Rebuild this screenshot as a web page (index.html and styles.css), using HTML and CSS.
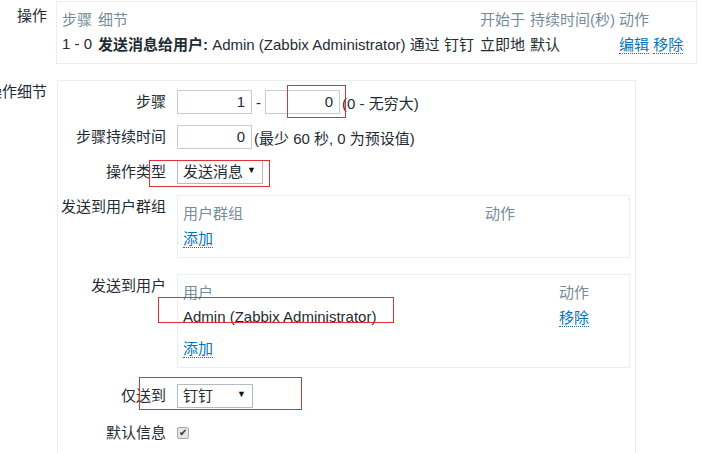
FILE: index.html
```html
<!DOCTYPE html>
<html lang="zh-CN">
<head>
<meta charset="utf-8">
<title>操作</title>
<link rel="stylesheet" href="styles.css">
</head>
<body>
<div class="page">
  <div class="section sec-ops">
    <div class="sec-label"><span>操作</span></div>
    <div class="ops-box">
      <table class="ops-table">
        <colgroup>
          <col class="c-step"><col class="c-detail"><col class="c-start"><col class="c-dur"><col class="c-act">
        </colgroup>
        <thead>
          <tr><th>步骤</th><th>细节</th><th>开始于</th><th>持续时间(秒)</th><th>动作</th></tr>
        </thead>
        <tbody>
          <tr>
            <td>1 - 0</td>
            <td><b>发送消息给用户:</b> Admin (Zabbix Administrator) 通过 钉钉</td>
            <td>立即地</td>
            <td>默认</td>
            <td><a class="link">编辑</a> <a class="link">移除</a></td>
          </tr>
        </tbody>
      </table>
    </div>
  </div>

  <div class="section sec-detail">
    <div class="sec-label"><span>操作细节</span></div>
    <div class="detail-box">
      <div class="form">
        <div class="row">
          <div class="lbl lbl-input">步骤</div>
          <div class="ctrl ctrl-inline">
            <div class="input">1</div>
            <span class="dash">-</span>
            <div class="input">0</div>
            <span class="hint">(0 - 无穷大)</span>
          </div>
        </div>
        <div class="row">
          <div class="lbl lbl-input">步骤持续时间</div>
          <div class="ctrl ctrl-inline">
            <div class="input">0</div>
            <span class="hint">(最少 60 秒, 0 为预设值)</span>
          </div>
        </div>
        <div class="row">
          <div class="lbl lbl-input">操作类型</div>
          <div class="ctrl ctrl-inline">
            <div class="select select-type"><span>发送消息</span><span class="arrow">▼</span></div>
          </div>
        </div>
        <div class="row">
          <div class="lbl lbl-box">发送到用户群组</div>
          <div class="ctrl">
            <div class="list-box">
              <table class="list-table">
                <colgroup><col><col class="c-act-group"></colgroup>
                <thead><tr><th>用户群组</th><th>动作</th></tr></thead>
                <tbody>
                  <tr><td colspan="2"><a class="link">添加</a></td></tr>
                </tbody>
              </table>
            </div>
          </div>
        </div>
        <div class="row row-wide">
          <div class="lbl lbl-box">发送到用户</div>
          <div class="ctrl">
            <div class="list-box">
              <table class="list-table">
                <colgroup><col><col class="c-act-user"></colgroup>
                <thead><tr><th>用户</th><th>动作</th></tr></thead>
                <tbody>
                  <tr class="data-row"><td>Admin (Zabbix Administrator)</td><td><a class="link">移除</a></td></tr>
                  <tr><td colspan="2"><a class="link">添加</a></td></tr>
                </tbody>
              </table>
            </div>
          </div>
        </div>
        <div class="row row-wide">
          <div class="lbl lbl-input">仅送到</div>
          <div class="ctrl ctrl-inline">
            <div class="select select-media"><span>钉钉</span><span class="arrow">▼</span></div>
          </div>
        </div>
        <div class="row row-check">
          <div class="lbl lbl-input">默认信息</div>
          <div class="ctrl ctrl-inline">
            <span class="checkbox">✔</span>
          </div>
        </div>
      </div>
    </div>
  </div>

  <svg class="marks" width="723" height="453" viewBox="0 0 723 453" xmlns="http://www.w3.org/2000/svg">
    <g fill="none" stroke="#e0303a" stroke-width="1">
      <rect x="287.5" y="85.5" width="58" height="32"/>
      <rect x="149.5" y="160.5" width="120" height="26"/>
      <rect x="158.5" y="297.5" width="235" height="25"/>
      <rect x="139.5" y="377.5" width="162" height="32"/>
    </g>
  </svg>
</div>
</body>
</html>
```

FILE: styles.css
```css
html, body {
  margin: 0;
  padding: 0;
  background: #ffffff;
}

body {
  font-family: "Liberation Sans", Arial, "Noto Sans CJK SC", sans-serif;
  font-size: 15px;
  color: #1f2c33;
  overflow: hidden;
}

.page {
  position: relative;
  padding-top: 1px;
}

.section {
  display: flex;
  align-items: flex-start;
}

.sec-label {
  width: 56px;
  flex: none;
  box-sizing: border-box;
  padding-right: 9px;
  display: flex;
  justify-content: flex-end;
  white-space: nowrap;
  line-height: 20px;
}

.sec-ops .sec-label {
  padding-top: 5px;
}

.sec-detail {
  margin-top: 16px;
}

.sec-detail .sec-label {
  padding-top: 2px;
}

/* operations list */
.ops-box {
  width: 641px;
  box-sizing: border-box;
  border: 1px solid #ebeef0;
  padding: 4px 5px 7px 5px;
}

.ops-table {
  border-collapse: collapse;
  table-layout: fixed;
  width: 100%;
}

.ops-table th,
.ops-table td {
  padding: 0;
  height: 25px;
  text-align: left;
  white-space: nowrap;
  vertical-align: middle;
}

.ops-table th {
  font-weight: normal;
  color: #768d99;
}

.ops-table b {
  font-weight: bold;
}

.c-step { width: 36px; }
.c-detail { width: 382px; }
.c-start { width: 50px; }
.c-dur { width: 89px; }

.link {
  color: #0275b8;
  text-decoration: none;
  border-bottom: 1px dotted #0275b8;
  cursor: pointer;
}

/* operation details */
.detail-box {
  margin-left: 1px;
  width: 579px;
  box-sizing: border-box;
  border: 1px solid #ebeef0;
}

.form {
  padding: 9px 5px 40px 0;
  display: flex;
  flex-direction: column;
  gap: 11px;
}

.row {
  display: flex;
  align-items: flex-start;
  gap: 11px;
}

.row-wide {
  margin-top: 5px;
}

.row-check {
  margin-top: 2px;
}

.lbl {
  width: 108px;
  flex: none;
  text-align: right;
  white-space: nowrap;
}

.lbl-input {
  line-height: 24px;
}

.lbl-box {
  line-height: 20px;
  padding-top: 2px;
}

.ctrl {
  flex: 1;
  min-width: 0;
}

.ctrl-inline {
  display: flex;
  align-items: center;
  gap: 4px;
  height: 24px;
  white-space: nowrap;
}

.input {
  width: 75px;
  height: 24px;
  box-sizing: border-box;
  border: 1px solid #c4cdd2;
  padding: 0 6px;
  text-align: right;
  line-height: 22px;
}

.hint {
  margin-left: -2px;
}

.select {
  height: 24px;
  box-sizing: border-box;
  border: 1px solid #b4bcc2;
  padding: 0 6px 0 5px;
  display: flex;
  align-items: center;
  justify-content: space-between;
  line-height: 22px;
  background: #ffffff;
}

.select-type {
  width: 86px;
}

.select-media {
  width: 76px;
}

.arrow {
  font-size: 9px;
  color: #111111;
  line-height: 1;
  margin-top: -3px;
}

.checkbox {
  width: 12px;
  height: 12px;
  box-sizing: border-box;
  border: 1px solid #a9a9a9;
  background: #e4e4e4;
  border-radius: 2px;
  font-size: 10px;
  line-height: 10px;
  text-align: center;
  color: #333333;
  display: inline-block;
}

.list-box {
  border: 1px solid #ebeef0;
  padding: 4px 5px 7px 5px;
}

.list-table {
  width: 100%;
  border-collapse: collapse;
  table-layout: fixed;
}

.list-table th,
.list-table td {
  padding: 0;
  height: 25px;
  text-align: left;
  vertical-align: middle;
  white-space: nowrap;
}

.list-table th {
  font-weight: normal;
  color: #768d99;
}

.list-table .data-row td {
  padding-bottom: 6px;
}

.c-act-group { width: 139px; }
.c-act-user { width: 65px; }

/* red annotation marks drawn over the form */
.marks {
  position: absolute;
  left: 0;
  top: 0;
  pointer-events: none;
}
```
